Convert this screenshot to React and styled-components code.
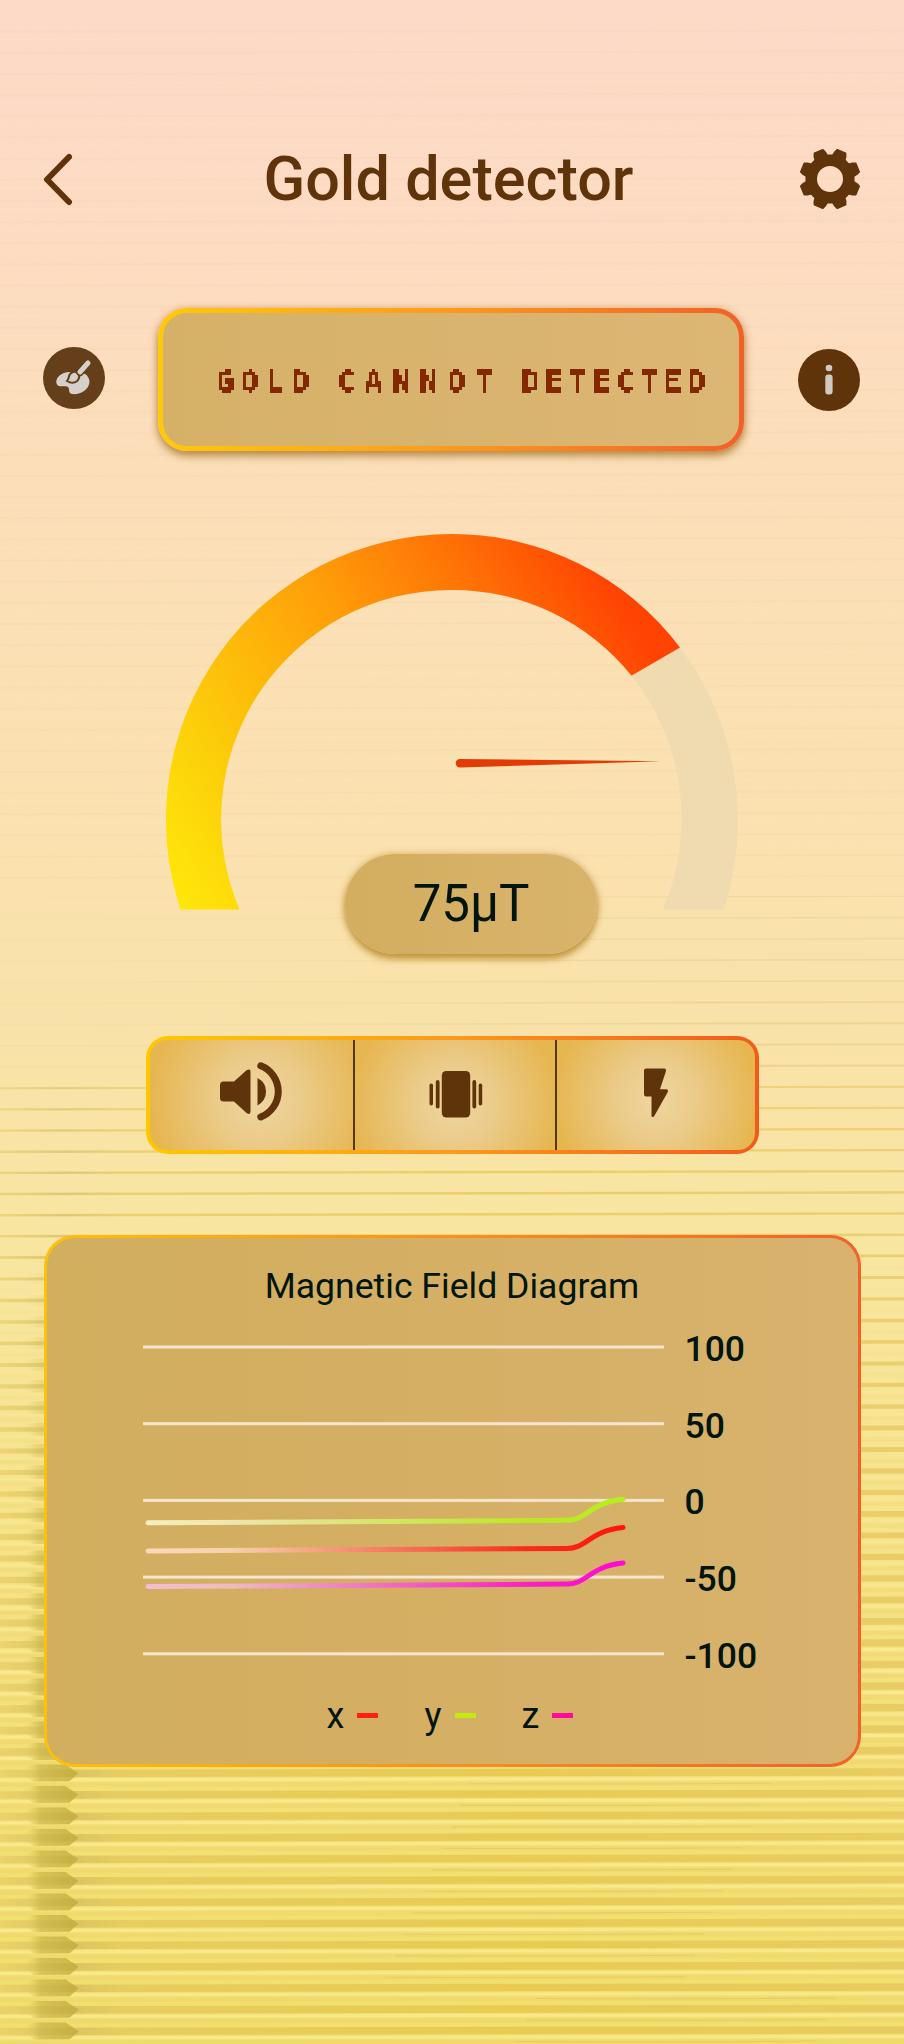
import React from 'react';
import styled, { createGlobalStyle } from 'styled-components';

const BROWN = '#60340a';
const INK = '#03150f';
const FRAME = 'linear-gradient(90deg, #ffc90c 0%, #fb9a1c 50%, #f2602a 100%)';

const Global = createGlobalStyle`
  * { box-sizing: border-box; }
  body { margin: 0; font-family: Roboto, "Liberation Sans", sans-serif; }
`;

const Page = styled.main`
  position: relative;
  display: flex;
  flex-direction: column;
  width: 904px;
  height: 2044px;
  overflow: hidden;
  isolation: isolate;
`;

const Backdrop = styled.svg`
  position: absolute;
  inset: 0;
  z-index: -1;
  display: block;
`;

const Header = styled.header`
  display: flex;
  align-items: center;
  justify-content: space-between;
  height: 90px;
  margin-top: 134px;
  padding: 0 44px 0 43px;
  svg { display: block; }
`;

const Title = styled.h1`
  margin: 0 6px 0 0;
  font-size: 61.2px;
  font-weight: 500;
  line-height: 70px;
  color: ${BROWN};
`;

const StatusRow = styled.section`
  display: grid;
  grid-template-columns: 62px 585.5px 62px;
  justify-content: space-between;
  align-items: center;
  height: 143px;
  margin-top: 84px;
  padding: 0 44px 0 43px;
`;

const RoundButton = styled.div`
  width: 62px;
  height: 62px;
  margin-top: ${p => p.$shift || 0}px;
  border-radius: 50%;
  background: ${p => p.$tone};
  svg { display: block; }
`;

const StatusCard = styled.div`
  display: flex;
  align-items: center;
  height: 143px;
  margin-left: -1px;
  padding-left: 53px;
  border: 5.5px solid transparent;
  border-radius: 29px;
  background:
    linear-gradient(90deg, #d5b168, #dcb673) padding-box,
    ${FRAME} border-box;
  box-shadow: 0 5px 8px rgba(150, 105, 20, .65), 0 0 7px rgba(190, 120, 60, .35);
  font-family: "DejaVu Sans Mono", monospace;
  font-size: 31px;
  font-weight: 700;
  line-height: 36px;
  color: #842800;
  white-space: nowrap;
`;

const Readout = styled.div`
  display: flex;
  margin-top: 2px;
  filter: url(#pixelate);
`;

const Word = styled.span`
  display: block;
  width: ${p => p.$width}px;
  letter-spacing: ${p => p.$track}px;
`;

const FilterDefs = styled.svg`
  position: absolute;
`;

const Gauge = styled.svg`
  display: block;
  margin: 83px 0 0 166px;
`;

const Reading = styled.div`
  position: relative;
  align-self: center;
  width: 252px;
  height: 100px;
  margin: -56px 0 0 38px;
  border-radius: 50px;
  background: linear-gradient(90deg, #d3ae60, #d8b36b);
  box-shadow: 0 5px 7px rgba(178, 130, 30, .75), 0 0 7px rgba(190, 140, 50, .5);
  font-size: 51px;
  line-height: 100px;
  text-align: center;
  color: ${INK};
`;

const Controls = styled.section`
  display: grid;
  grid-template-columns: 205px 202px 1fr;
  width: 613px;
  height: 118px;
  margin: 82px 0 0 145.5px;
  border: 4px solid transparent;
  border-radius: 22px;
  background: linear-gradient(90deg, #ffc800, #fb9a1c 50%, #f25a1a) border-box;
`;

const Control = styled.div`
  display: flex;
  border-right: ${p => (p.$last ? 0 : 2.5)}px solid #553808;
  border-radius: ${p => p.$corners};
  background: radial-gradient(circle at ${p => p.$glow}, #efd5a0 0%, #ebcb89 35%, #e6b650 88%);
  svg { display: block; overflow: visible; }
`;

const Diagram = styled.section`
  width: 817px;
  height: 532px;
  margin: 81px 0 0 43.5px;
  padding-top: 28px;
  border: 3px solid transparent;
  border-radius: 31px;
  background:
    linear-gradient(90deg, #d2ae5f, #d4af64 50%, #d9b36e) padding-box,
    linear-gradient(90deg, #fdc00d, #f8951c 45%, #f0622a) border-box;
  color: ${INK};
`;

const DiagramTitle = styled.h2`
  margin: 0;
  font-size: 35.6px;
  font-weight: 400;
  line-height: 40px;
  text-align: center;
`;

const Plot = styled.div`
  display: flex;
  gap: 21px;
  height: 393px;
  margin: 5px 0 0 96px;
  svg { display: block; }
`;

const Scale = styled.div`
  display: flex;
  flex-direction: column;
  font-size: 35.5px;
  font-weight: 500;
  line-height: 76.7px;
`;

const Legend = styled.div`
  display: flex;
  justify-content: center;
  gap: 46px;
  margin: -9px 4px 0 0;
  font-size: 36px;
  line-height: 42px;
`;

const LegendItem = styled.span`
  display: flex;
  align-items: center;
  gap: 13px;
  &::after {
    content: "";
    width: 21px;
    height: 5px;
    margin-top: -1px;
    background: ${p => p.$color};
  }
`;

/* Corrugated backdrop: one ridge roughly every 21px, growing heavier downwards. */
const ridges = [];
for (let y = 30; y < 2060; y += y < 1250 ? 21.15 : 21.5) {
  ridges.push(y);
}
const clamp = v => Math.max(0, Math.min(1, v));

function Ridge({ y }) {
  const low = clamp((y - 1230) / 450);
  const mid = clamp((y - 890) / 300);
  if (y < 890) {
    return (
      <g>
        <rect x="-10" y={y} width="930" height="2" fill="#e9b98f" opacity=".09" />
        <rect x="-10" y={y + 8} width="930" height="3" fill="#fff0c8" opacity=".09" />
      </g>
    );
  }
  const h = 1.2 + mid * 1.3 + low * 5;
  return (
    <g>
      <rect
        x="-10"
        y={y - h / 2}
        width="930"
        height={h}
        fill={mid < 0.6 ? 'url(#ridgeRight)' : 'url(#ridge)'}
        opacity={0.3 + mid * 0.35 + low * 0.05}
      />
      {low > 0 && (
        <g>
          <rect x="-10" y={y + 5} width="930" height="3" fill="#faea94" opacity={low * 0.8} />
          <rect x="-10" y={y + 9.5} width="930" height="4" fill="#efd26e" opacity={low * 0.5} />
          <path
            d={`M0 ${y - 3} H22 Q28 ${y - 5 - low * 4} 34 ${y - 5 - low * 4} H64 L77 ${y} L68 ${y + 5 + low * 3} H32 L24 ${y + 3} H0 Z`}
            fill="url(#shade)"
            opacity={low * 0.75}
          />
          <path
            d={`M${380 + ((y * 7) % 160)} ${y + 11} q160 1 300 0`}
            stroke="#cdb34a"
            strokeWidth="1"
            fill="none"
            opacity={low * 0.3}
          />
        </g>
      )}
    </g>
  );
}

function BackdropArt() {
  return (
    <Backdrop width="904" height="2044" viewBox="0 0 904 2044">
      <defs>
        <linearGradient id="base" x1="0" y1="0" x2="0" y2="1">
          <stop offset="0" stopColor="#fdd9c8" />
          <stop offset=".1" stopColor="#fddbc3" />
          <stop offset=".22" stopColor="#fcdeba" />
          <stop offset=".38" stopColor="#fbe1b1" />
          <stop offset=".5" stopColor="#f9e2a9" />
          <stop offset=".62" stopColor="#f8e6a0" />
          <stop offset=".72" stopColor="#f6e48e" />
          <stop offset=".86" stopColor="#f2e076" />
          <stop offset="1" stopColor="#f1e06c" />
        </linearGradient>
        <linearGradient id="ridge">
          <stop offset="0" stopColor="#ecd067" />
          <stop offset=".08" stopColor="#cfb75c" />
          <stop offset=".14" stopColor="#e3c558" />
          <stop offset=".55" stopColor="#e5c244" />
          <stop offset="1" stopColor="#e5c35c" />
        </linearGradient>
        <linearGradient id="ridgeRight">
          <stop offset="0" stopColor="#d9bd74" stopOpacity=".15" />
          <stop offset=".4" stopColor="#d9bd74" stopOpacity=".3" />
          <stop offset=".8" stopColor="#dfc076" />
          <stop offset="1" stopColor="#e3c47c" />
        </linearGradient>
        <linearGradient id="shade">
          <stop offset="0" stopColor="#ebd565" stopOpacity="0" />
          <stop offset=".28" stopColor="#ebd565" stopOpacity="0" />
          <stop offset=".5" stopColor="#cdb84c" />
          <stop offset="1" stopColor="#bfa838" />
        </linearGradient>
      </defs>
      <rect width="904" height="2044" fill="url(#base)" />
      <g transform="rotate(-.1 452 1000)">
        {ridges.map(y => <Ridge key={y} y={y} />)}
      </g>
    </Backdrop>
  );
}

/* Samples the lettering once per 3px cell and grows each hit to a full cell. */
function PixelFilter() {
  return (
    <FilterDefs width="0" height="0">
      <filter id="pixelate" x="0" y="0" width="100%" height="100%" colorInterpolationFilters="sRGB">
        <feFlood x="1" y="1" width="1" height="1" floodColor="#000" result="seed" />
        <feOffset in="seed" x="0" y="0" width="3" height="3" dx="0" dy="0" result="cell" />
        <feTile in="cell" result="grid" />
        <feComposite in="SourceGraphic" in2="grid" operator="in" />
        <feComponentTransfer>
          <feFuncA type="discrete" tableValues="0 1" />
        </feComponentTransfer>
        <feMorphology operator="dilate" radius="1" />
      </filter>
    </FilterDefs>
  );
}

function Gear() {
  const at = (r, deg) => {
    const a = (deg * Math.PI) / 180;
    return `${(30 + r * Math.cos(a)).toFixed(2)} ${(30 + r * Math.sin(a)).toFixed(2)}`;
  };
  const points = [];
  for (let i = 0; i < 8; i += 1) {
    const c = 22.5 + i * 45;
    points.push(at(23.7, c - 15.5), at(27.3, c - 12), at(29.9, c - 8.5), at(29.9, c + 8.5), at(27.3, c + 12), at(23.7, c + 15.5));
  }
  return (
    <svg width="60" height="60" viewBox="0 0 60 60">
      <path
        fillRule="evenodd"
        fill={BROWN}
        stroke={BROWN}
        strokeWidth="2"
        strokeLinejoin="round"
        d={`M${points.join(' L')} Z M44 30 a14 14 0 1 0 -28 0 a14 14 0 1 0 28 0 Z`}
      />
    </svg>
  );
}

const series = [
  { id: 'sy', y: 178.8, from: '#f3efc0', to: '#b6f01a' },
  { id: 'sx', y: 207, from: '#fbd8bb', to: '#ff150e' },
  { id: 'sz', y: 242.6, from: '#f0bfd0', to: '#ff08d4' },
];

export default function App() {
  return (
    <>
      <Global />
      <Page>
        <BackdropArt />
        <PixelFilter />
        <Header>
          <svg width="60" height="60" viewBox="0 0 60 60">
            <path d="M26 8 L4 30.500 L26 53" fill="none" stroke={BROWN} strokeWidth="6" strokeLinecap="round" strokeLinejoin="round" />
          </svg>
          <Title>Gold detector</Title>
          <Gear />
        </Header>

        <StatusRow>
          <RoundButton $tone="#643f1a" $shift={-3}>
            <svg width="62" height="62" viewBox="0 0 62 62">
              <path
                d="M27 25 C18 25 12 31 13.500 36.500 C15 41 20 38.500 24 39.500 C28 41 24 46 29 47 C37 48 46 43 46.500 35 C46.500 31 44 28 42 27 Z"
                fill="#d5d0ca"
              />
              <path d="M24 34 C27 32 24 27 30 25 C35 24 38 29 35 33 C32 37 27 36 24 34 Z" fill="#d5d0ca" stroke="#643f1a" strokeWidth="2" />
              <path d="M37 25 L45.500 15.500" stroke="#643f1a" strokeWidth="8" strokeLinecap="round" />
              <path d="M37 25 L45 16" stroke="#d5d0ca" strokeWidth="5" strokeLinecap="round" />
            </svg>
          </RoundButton>
          <StatusCard>
            <Readout>
              <Word $width={121} $track={6.3}>GOLD</Word>
              <Word $width={184} $track={8.9}>CANNOT</Word>
              <Word $width={190} $track={5.1}>DETECTED</Word>
            </Readout>
          </StatusCard>
          <RoundButton $tone={BROWN}>
            <svg width="62" height="62" viewBox="0 0 62 62">
              <circle cx="31" cy="19" r="3.300" fill="#d0cac3" />
              <rect x="27.300" y="25.500" width="7.300" height="20" rx="3" fill="#d0cac3" />
            </svg>
          </RoundButton>
        </StatusRow>

        <Gauge width="572" height="376" viewBox="166 534 572 376">
          <defs>
            <linearGradient id="heat" gradientUnits="userSpaceOnUse" x1="180" y1="910" x2="640" y2="630">
              <stop offset="0" stopColor="#ffe70a" />
              <stop offset=".19" stopColor="#fcd00a" />
              <stop offset=".52" stopColor="#ffa009" />
              <stop offset=".77" stopColor="#ff7306" />
              <stop offset="1" stopColor="#ff4303" />
            </linearGradient>
          </defs>
          <path d="M680 647.500 A285.500 285.500 0 0 1 723.500 909.500 H663 A229.500 229.500 0 0 0 631.500 675.700 Z" fill="#efdbaf" />
          <path
            d="M180.500 909.500 A285.500 285.500 0 0 1 451.500 534 A285.500 285.500 0 0 1 680 647.500 L631.500 675.700 A229.500 229.500 0 0 0 451.500 590 A229.500 229.500 0 0 0 239.500 909.500 Z"
            fill="url(#heat)"
          />
          <path d="M460 759 L661 761.300 L460 767.500 A4.200 4.200 0 0 1 460 759 Z" fill="#e33b06" />
        </Gauge>
        <Reading>75µT</Reading>

        <Controls>
          <Control $glow="54% 54%" $corners="17px 0 0 17px">
            <svg width="202" height="110" viewBox="149.500 1040.500 202 110" fill={BROWN}>
              <path d="M223 1082 H233.500 L246 1070.800 Q250 1068.500 250 1072 V1112 Q250 1116 246 1113.500 L233.500 1102 H223 Q219.500 1102 219.500 1098.500 V1085.500 Q219.500 1082 223 1082 Z" />
              <path d="M257 1078.500 Q265.500 1083 265.500 1092 Q265.500 1101 257 1106 Z" />
              <path d="M260.300 1066.300 A27.500 27.500 0 0 1 260.300 1117.500" fill="none" stroke={BROWN} strokeWidth="7" strokeLinecap="round" />
            </svg>
          </Control>
          <Control $glow="50% 58%" $corners="0">
            <svg width="199" height="110" viewBox="354.500 1040.500 199 110" fill={BROWN}>
              <rect x="441.300" y="1071.500" width="28.400" height="46.500" rx="4.500" />
              <rect x="435.300" y="1080.500" width="3.800" height="28.500" rx="1.900" />
              <rect x="429" y="1084" width="3.500" height="22" rx="1.700" />
              <rect x="471.900" y="1080.500" width="3.800" height="28.500" rx="1.900" />
              <rect x="478.200" y="1084" width="3.500" height="22" rx="1.700" />
            </svg>
          </Control>
          <Control $glow="50% 54%" $corners="0 17px 17px 0" $last>
            <svg width="197" height="110" viewBox="556.500 1040.500 197 110" fill={BROWN}>
              <path d="M645.500 1069 H664 Q666 1069.300 665.500 1071.500 L659.500 1089.800 H666 Q668 1090 667.300 1092.500 L653.500 1117 Q651 1118.500 651 1116 V1097 H645.500 Q643.500 1097 643.500 1094.500 V1071 Q643.500 1069 645.500 1069 Z" />
            </svg>
          </Control>
        </Controls>

        <Diagram>
          <DiagramTitle>Magnetic Field Diagram</DiagramTitle>
          <Plot>
            <svg width="521" height="393" viewBox="0 0 521 393">
              <defs>
                {series.map(s => (
                  <linearGradient key={s.id} id={s.id} gradientUnits="userSpaceOnUse" x1="0" y1="0" x2="480" y2="0">
                    <stop offset="0" stopColor={s.from} />
                    <stop offset=".18" stopColor={s.from} stopOpacity=".85" />
                    <stop offset=".8" stopColor={s.to} stopOpacity=".85" />
                    <stop offset="1" stopColor={s.to} />
                  </linearGradient>
                ))}
              </defs>
              {[0, 1, 2, 3, 4].map(i => (
                <rect key={i} x="0" y={34.5 + i * 76.7} width="521" height="3" fill="#f6e6cf" />
              ))}
              {series.map(s => (
                <path
                  key={s.id}
                  d={`M5 ${s.y + 33} L424 ${s.y + 30.500} C444 ${s.y + 30.500} 446 ${s.y + 13} 480 ${s.y + 9.500}`}
                  fill="none"
                  stroke={`url(#${s.id})`}
                  strokeWidth="5"
                  strokeLinecap="round"
                />
              ))}
            </svg>
            <Scale>
              <span>100</span>
              <span>50</span>
              <span>0</span>
              <span>-50</span>
              <span>-100</span>
            </Scale>
          </Plot>
          <Legend>
            <LegendItem $color="#ff2015">x</LegendItem>
            <LegendItem $color="#c2ec10">y</LegendItem>
            <LegendItem $color="#ff0a9c">z</LegendItem>
          </Legend>
        </Diagram>
      </Page>
    </>
  );
}
